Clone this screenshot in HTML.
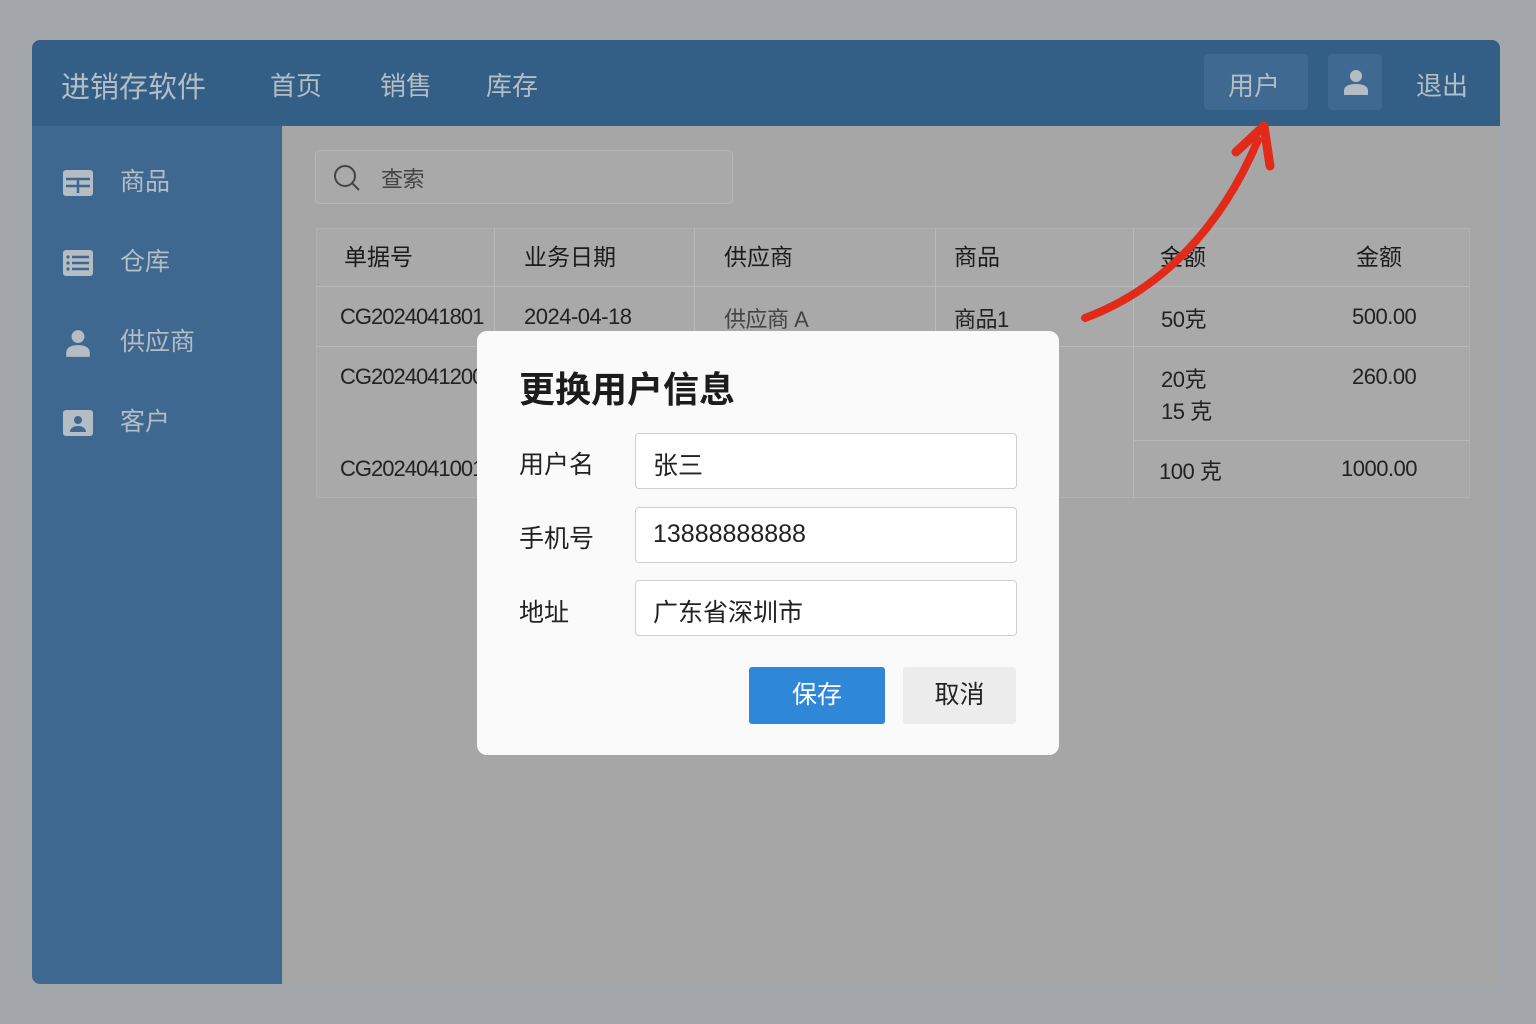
<!DOCTYPE html>
<html><head><meta charset="utf-8"><style>
*{margin:0;padding:0;box-sizing:border-box}
body{width:1536px;height:1024px;background:#a3a6aa;font-family:"Liberation Sans","Noto Sans CJK SC",sans-serif;position:relative;overflow:hidden}
.win{position:absolute;left:32px;top:40px;width:1468px;height:944px;border-radius:8px;overflow:hidden;background:#a6a6a6}
.hdr{position:absolute;left:0;top:0;width:1468px;height:86px;background:#335f86}
.hdr span{position:absolute;color:#b4bcc4;font-size:26px;top:26px}
.side{position:absolute;left:0;top:86px;width:250px;height:858px;background:#3e6890}
.side .it{position:absolute;left:30px;color:#b4bcc4;font-size:25px}
.side .it svg{vertical-align:middle;margin-right:26px}
.abs{position:absolute}
.t{position:absolute;font-size:22px;color:#222;letter-spacing:-0.5px}
.th{font-size:23px;color:#1c1c1c;letter-spacing:0}
.modal{position:absolute;left:477px;top:331px;width:582px;height:424px;background:#fafafa;border-radius:10px}
.lbl{position:absolute;left:42px;font-size:25px;color:#222}
.inp{position:absolute;left:158px;width:382px;height:56px;border:1px solid #cfcfcf;border-radius:4px;background:#fff;font-size:25px;color:#222;padding:12px 17px}
</style></head><body>
<div class="win">
 <div class="hdr">
  <span style="left:29px;font-size:29px;top:24px">进销存软件</span>
  <span style="left:238px">首页</span><span style="left:348px">销售</span><span style="left:454px">库存</span>
  <div class="abs" style="left:1172px;top:14px;width:104px;height:56px;background:#3f6990;border-radius:4px"></div>
  <span style="left:1196px">用户</span>
  <div class="abs" style="left:1296px;top:14px;width:54px;height:56px;background:#3f6990;border-radius:4px"></div>
  <svg class="abs" style="left:1310px;top:28px" width="28" height="28" viewBox="0 0 28 28"><circle cx="14" cy="8" r="6" fill="#b4bcc4"/><path d="M2 27v-4c0-5 5-7 12-7s12 2 12 7v4z" fill="#b4bcc4"/></svg>
  <span style="left:1384px">退出</span>
 </div>
 <div class="side">
  <div class="it" style="top:36px"><svg width="32" height="28" viewBox="0 0 32 28"><rect x="1" y="1" width="30" height="26" rx="3" fill="#b4bcc4"/><path d="M4 10h24M16 10v14M4 17h24" stroke="#3e6890" stroke-width="2.5"/></svg>商品</div>
  <div class="it" style="top:116px"><svg width="32" height="28" viewBox="0 0 32 28"><rect x="1" y="1" width="30" height="26" rx="3" fill="#b4bcc4"/><path d="M10 8h17M10 14h17M10 20h17" stroke="#3e6890" stroke-width="2.5"/><circle cx="6" cy="8" r="1.6" fill="#3e6890"/><circle cx="6" cy="14" r="1.6" fill="#3e6890"/><circle cx="6" cy="20" r="1.6" fill="#3e6890"/></svg>仓库</div>
  <div class="it" style="top:196px"><svg width="32" height="30" viewBox="0 0 28 28"><circle cx="14" cy="8" r="6" fill="#b4bcc4"/><path d="M3 27v-4c0-5 5-7 11-7s11 2 11 7v4z" fill="#b4bcc4"/></svg>供应商</div>
  <div class="it" style="top:276px"><svg width="32" height="28" viewBox="0 0 32 28"><rect x="1" y="1" width="30" height="26" rx="3" fill="#b4bcc4"/><circle cx="16" cy="11" r="4" fill="#3e6890"/><path d="M8 23c0-4 4-6 8-6s8 2 8 6z" fill="#3e6890"/></svg>客户</div>
 </div>
 <div class="abs" style="left:283px;top:110px;width:418px;height:54px;border:1px solid #b8b8b8;border-radius:5px;background:#a9a9a9"></div>
 <svg class="abs" style="left:300px;top:123px" width="30" height="30" viewBox="0 0 30 30"><circle cx="13" cy="13" r="10" stroke="#444" stroke-width="2" fill="none"/><path d="M20 20l7 7" stroke="#444" stroke-width="2"/></svg>
 <div class="t" style="left:349px;top:122px;color:#444">查索</div>
 <div class="abs" style="left:284px;top:188px;width:1154px;height:270px;background:#a9a9a9;border:1px solid #b0b0b0"></div>
 <div class="abs" style="left:284px;top:246px;width:1154px;height:1px;background:#b8b8b8"></div>
 <div class="abs" style="left:284px;top:306px;width:1154px;height:1px;background:#b8b8b8"></div>
 <div class="abs" style="left:1101px;top:400px;width:337px;height:1px;background:#b8b8b8"></div>
 <div class="abs" style="left:462px;top:188px;width:1px;height:118px;background:#b8b8b8"></div>
 <div class="abs" style="left:662px;top:188px;width:1px;height:118px;background:#b8b8b8"></div>
 <div class="abs" style="left:903px;top:188px;width:1px;height:118px;background:#b8b8b8"></div>
 <div class="abs" style="left:1101px;top:188px;width:1px;height:270px;background:#b8b8b8"></div>
 <div class="t th" style="left:312px;top:198px">单据号</div>
 <div class="t th" style="left:492px;top:198px">业务日期</div>
 <div class="t th" style="left:692px;top:198px">供应商</div>
 <div class="t th" style="left:922px;top:198px">商品</div>
 <div class="t th" style="left:1128px;top:198px">金额</div>
 <div class="t th" style="left:1324px;top:198px">金额</div>
 <div class="t" style="left:308px;top:264px;letter-spacing:-1px">CG2024041801</div>
 <div class="t" style="left:492px;top:264px">2024-04-18</div>
 <div class="t" style="left:692px;top:262px;color:#444">供应商 A</div>
 <div class="t" style="left:922px;top:262px">商品1</div>
 <div class="t" style="left:1129px;top:262px">50克</div>
 <div class="t" style="left:1320px;top:264px">500.00</div>
 <div class="t" style="left:308px;top:324px;letter-spacing:-1px">CG2024041200</div>
 <div class="t" style="left:1129px;top:322px">20克<br>15 克</div>
 <div class="t" style="left:1320px;top:324px">260.00</div>
 <div class="t" style="left:308px;top:416px;letter-spacing:-1px">CG2024041001</div>
 <div class="t" style="left:1127px;top:414px">100 克</div>
 <div class="t" style="left:1309px;top:416px">1000.00</div>
</div>
<svg class="abs" style="left:0;top:0;position:absolute" width="1536" height="1024"><path d="M1085 318C1160 290 1220 230 1258 140" stroke="#e22a1a" stroke-width="8" fill="none" stroke-linecap="round"/><path d="M1236 152L1264 126L1270 166" stroke="#e22a1a" stroke-width="9" fill="none" stroke-linecap="round" stroke-linejoin="round"/></svg>
<div class="modal">
 <div class="abs" style="left:42px;top:30px;font-size:36px;color:#1c1c1c;font-weight:bold">更换用户信息</div>
 <div class="lbl" style="top:114px">用户名</div><div class="inp" style="top:102px">张三</div>
 <div class="lbl" style="top:188px">手机号</div><div class="inp" style="top:176px">13888888888</div>
 <div class="lbl" style="top:262px">地址</div><div class="inp" style="top:249px">广东省深圳市</div>
 <div class="abs" style="left:272px;top:336px;width:136px;height:57px;background:#2f87d8;border-radius:3px;color:#fff;font-size:25px;text-align:center;line-height:57px">保存</div>
 <div class="abs" style="left:426px;top:336px;width:113px;height:57px;background:#ececec;border-radius:3px;color:#222;font-size:25px;text-align:center;line-height:57px">取消</div>
</div>
</body></html>
